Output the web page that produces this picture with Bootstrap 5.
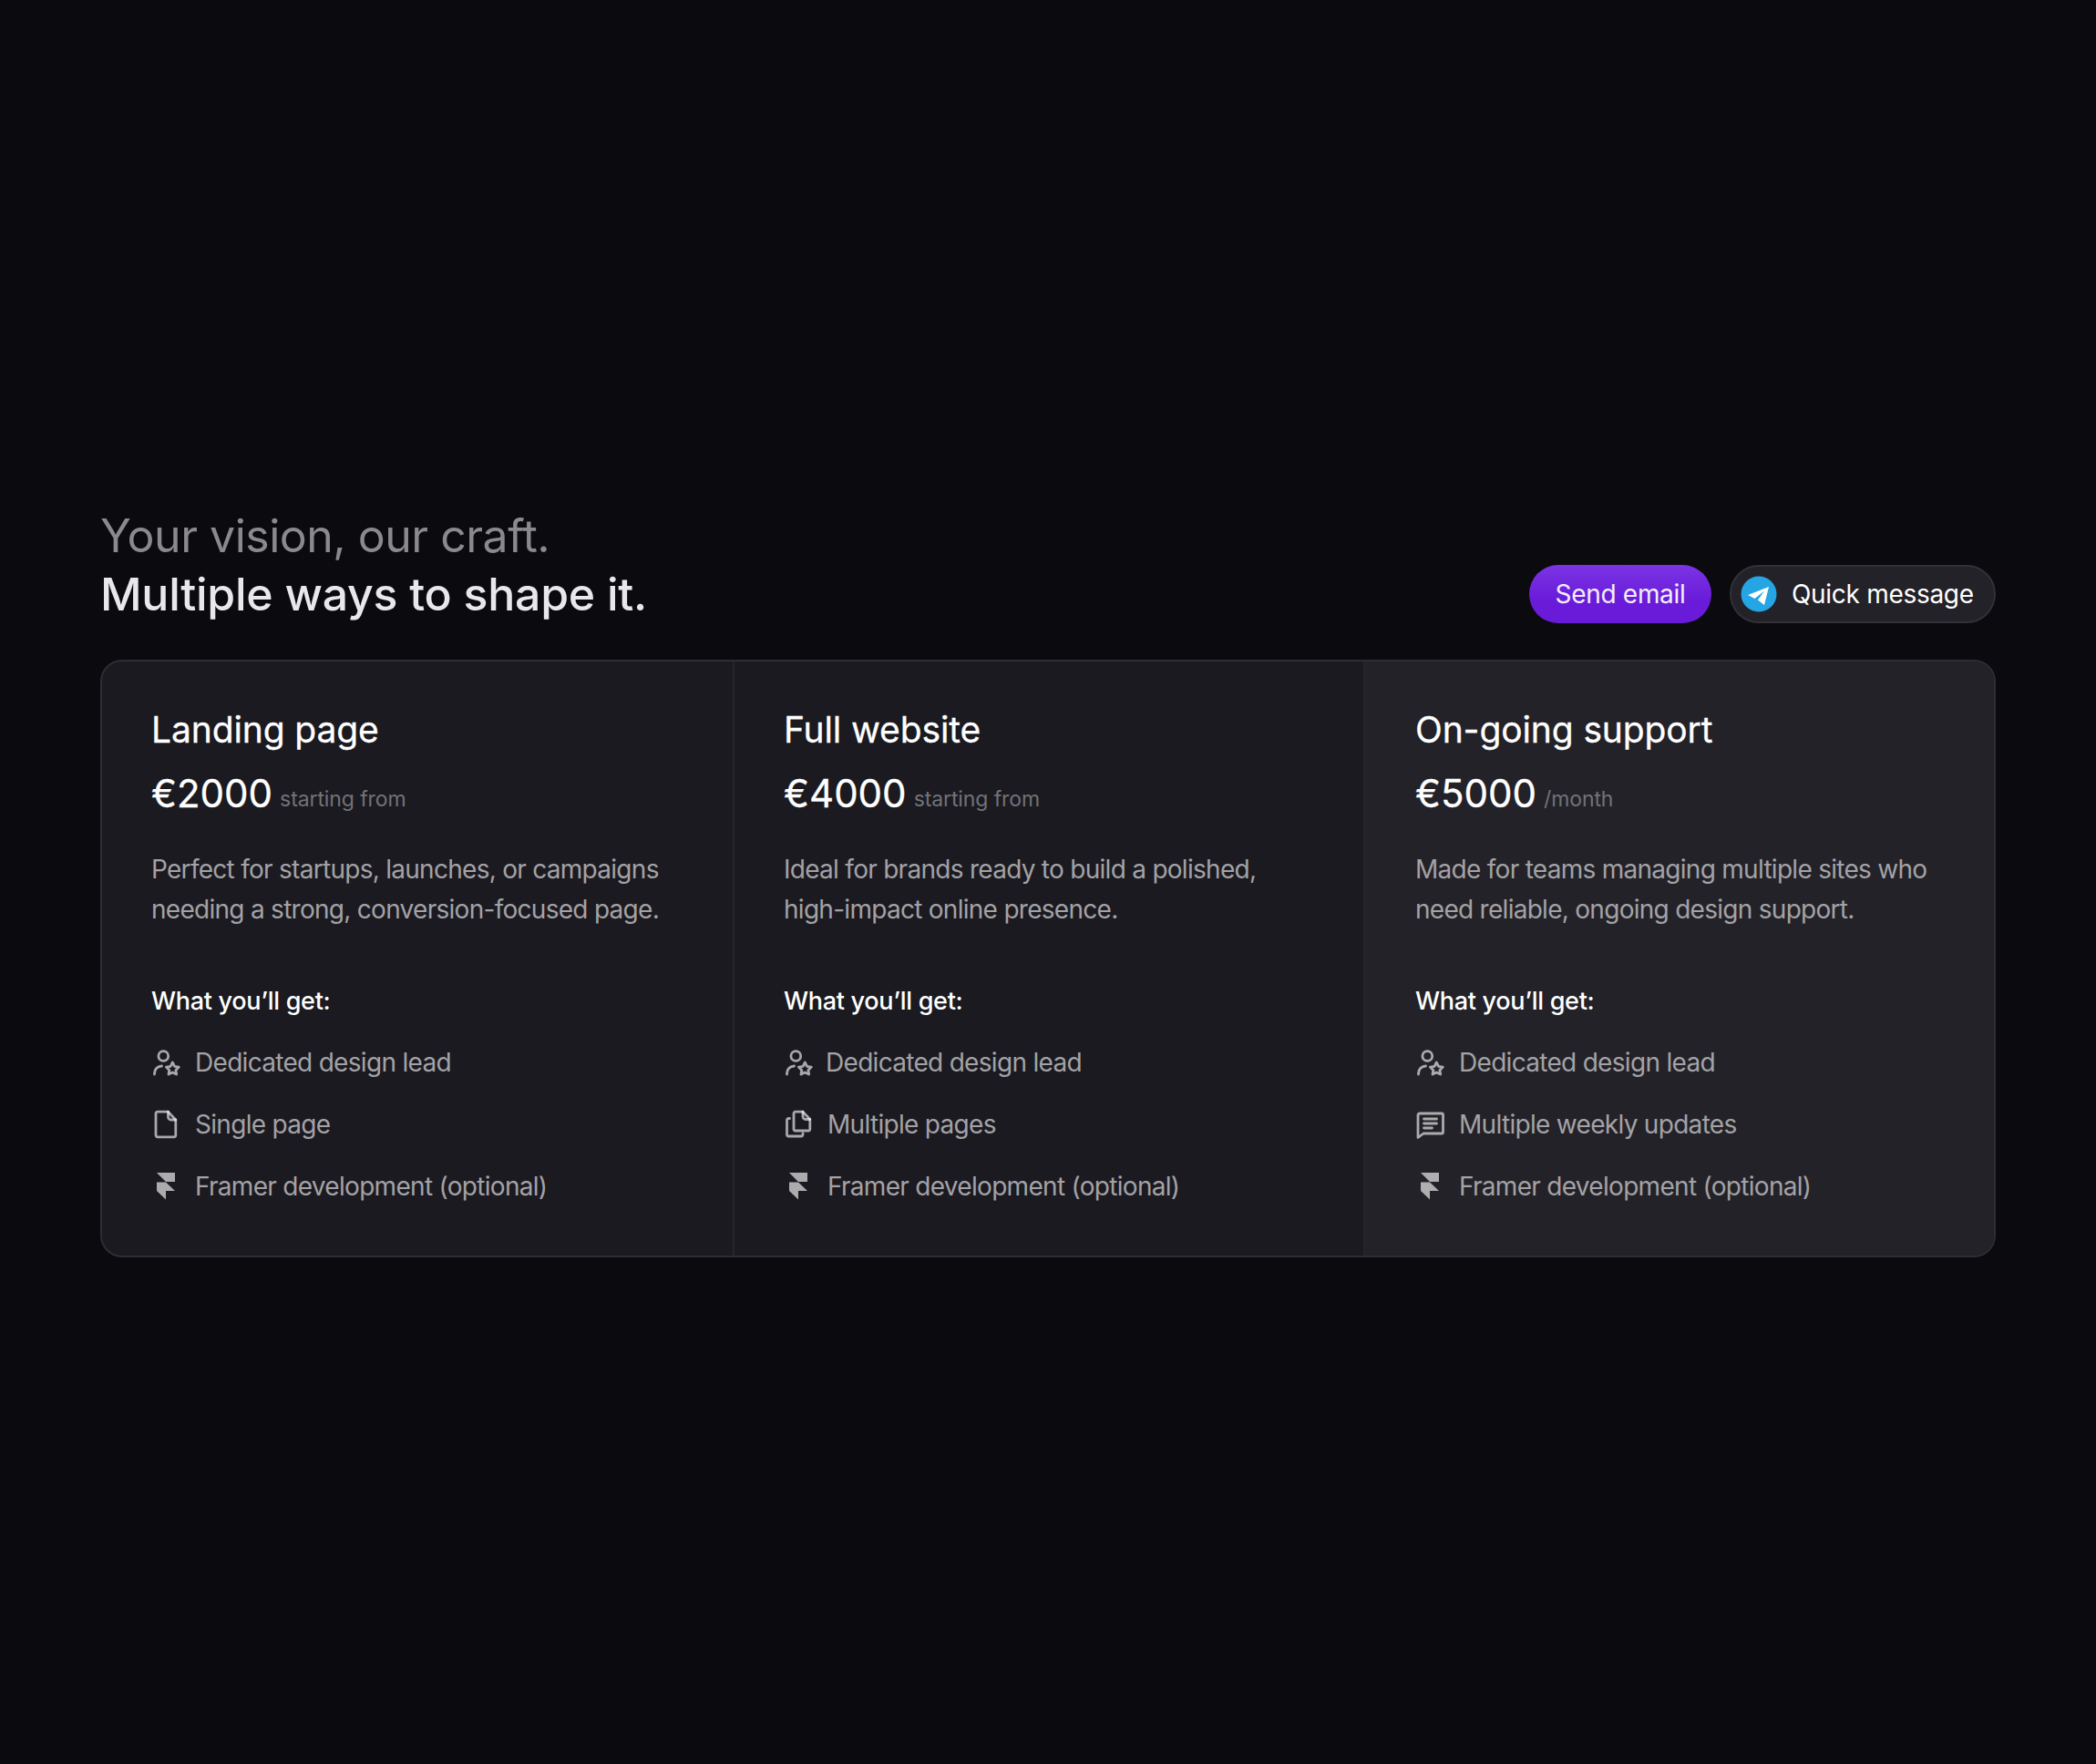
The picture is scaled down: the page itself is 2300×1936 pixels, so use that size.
<!doctype html>
<html lang="en"><head><meta charset="utf-8"><title>Pricing</title>
<link href="https://cdn.jsdelivr.net/npm/bootstrap@5.3.0/dist/css/bootstrap.min.css" rel="stylesheet">
<style>
html,body{height:100%}
body{background:#0a0a0f;font-family:Inter,"Liberation Sans",sans-serif;color:#fff}
.stage{min-height:1936px;padding:0 110px;display:flex;flex-direction:column;justify-content:center}
.head-row{margin-bottom:40px}
.hero{font-size:50px;line-height:64px;font-weight:500;letter-spacing:-.26px;margin:0;color:#e8e8ea}
.hero span{display:block;color:#8a898d;font-weight:400;letter-spacing:-.5px}
.pill{height:64px;border-radius:32px;font-size:28px;line-height:1;color:#fff;display:inline-flex;align-items:center;border:0;letter-spacing:-.3px}
.pill-send{width:200px;justify-content:center;background:linear-gradient(180deg,#7b35e4,#6a1bd9 60%);color:#f2eefc}
.pill-quick{width:292px;background:#232228;border:2px solid #323137;padding-left:10px;gap:16px}
.pill-wrap{gap:20px}
.plans{border:2px solid #2e2d33;border-radius:24px;overflow:hidden;background:#1b1a20}
.plan{padding:52px 54px 48px;height:652px}
.plan+.plan{border-left:2px solid #26252b}
.plan-last{background:#232228;padding-left:55px}
.plan-title{font-size:39px;line-height:46px;font-weight:400;margin:0 0 22px;letter-spacing:-.12px;-webkit-text-stroke:.3px #fff}
.price{font-size:42px;line-height:50px;margin:3px 0 29px;display:flex;align-items:baseline;gap:8px;-webkit-text-stroke:.3px #fff}
.price small{font-size:23px;color:#737277;letter-spacing:-.1px;position:relative;top:-1px;-webkit-text-stroke:0}
.blurb{font-size:28px;line-height:44px;color:#a3a2a6;margin:0 0 59px;letter-spacing:-.72px}
.get{font-size:27px;line-height:40px;margin-bottom:27px;font-weight:500;letter-spacing:-.3px}
.feat{list-style:none;margin:0;padding:0;display:flex;flex-direction:column;gap:28px}
.feat li{display:flex;align-items:center;gap:16px;font-size:28px;line-height:40px;color:#a3a2a6;letter-spacing:-.7px}
.feat li.snug{gap:14px}
.feat svg{width:32px;height:32px;flex:none}
.ic{fill:none;stroke:#fff;stroke-opacity:.62;stroke-width:2.8;stroke-linecap:round;stroke-linejoin:round}
.ic-fill{fill:#fff;fill-opacity:.64}
</style></head><body>
<svg width="0" height="0" class="position-absolute"><defs>
<symbol id="i-lead" viewBox="0 0 32 32"><g class="ic"><circle cx="13.3" cy="9" r="5.4"/><path d="M3.500 29v-1a8 8 0 0 1 8-8"/><path d="M23.300 16l2.300 4.300 4.700.8-3.400 3.300.8 4.700-4.400-2.200-4.300 2.200.8-4.700-3.400-3.300 4.700-.8z"/></g></symbol>
<symbol id="i-page" viewBox="0 0 32 32"><g class="ic"><path d="M7 2.200h11.500l8.300 8.800V27.800a2 2 0 0 1-2 2H7a2 2 0 0 1-2-2V4.200a2 2 0 0 1 2-2z"/><path d="M18.500 2.200V8a3 3 0 0 0 3 3h5.300"/></g></symbol>
<symbol id="i-pages" viewBox="0 0 32 32"><g class="ic"><path d="M13 2.200h8l7.800 8.200V21a2 2 0 0 1-2 2H13a2 2 0 0 1-2-2V4.200a2 2 0 0 1 2-2z"/><path d="M21 2.200V7.500a3 3 0 0 0 3 3h4.800"/><path d="M6.500 9.500H5.500a2 2 0 0 0-2 2V27a2 2 0 0 0 2 2h13.500a2 2 0 0 0 2-2v-1"/></g></symbol>
<symbol id="i-msg" viewBox="0 0 32 32"><g class="ic"><path d="M5 4h24a1.500 1.500 0 0 1 1.500 1.500v19a1.500 1.500 0 0 1-1.500 1.500H9l-6 4.500V6a2 2 0 0 1 2-2z"/><path d="M9.500 10h14M9.500 15h14M9.500 20h9"/></g></symbol>
<symbol id="i-framer" viewBox="0 0 32 32"><path class="ic-fill" d="M6 1h20v10H16zM6 11.600h10l10 9.400H16v9.500L6 21z"/></symbol>
</defs></svg>
<main class="stage">
<div class="d-flex justify-content-between align-items-end head-row">
<h1 class="hero"><span>Your vision, our craft.</span>Multiple ways to shape it.</h1>
<div class="d-flex pill-wrap">
<a class="pill pill-send text-decoration-none" href="#">Send email</a>
<a class="pill pill-quick text-decoration-none" href="#"><svg width="40" height="40" viewBox="0 0 40 40"><circle cx="20" cy="20" r="19.500" fill="#26a5e4"/><path fill="#fff" d="M8 21l23-9-5 20-7-5.500 7-10-10.500 8.500z"/></svg>Quick message</a>
</div></div>
<section class="row g-0 plans">
<article class="col-4 plan"><h2 class="plan-title">Landing page</h2><div class="price">€2000<small>starting from</small></div>
<p class="blurb">Perfect for startups, launches, or campaigns needing a strong, conversion-focused page.</p><div class="get">What you’ll get:</div>
<ul class="feat"><li><svg><use href="#i-lead"/></svg>Dedicated design lead</li><li><svg><use href="#i-page"/></svg>Single page</li><li><svg><use href="#i-framer"/></svg>Framer development (optional)</li></ul></article>
<article class="col-4 plan"><h2 class="plan-title">Full website</h2><div class="price">€4000<small>starting from</small></div>
<p class="blurb">Ideal for brands ready to build a polished, high-impact online presence.</p><div class="get">What you’ll get:</div>
<ul class="feat"><li class="snug"><svg><use href="#i-lead"/></svg>Dedicated design lead</li><li><svg><use href="#i-pages"/></svg>Multiple pages</li><li><svg><use href="#i-framer"/></svg>Framer development (optional)</li></ul></article>
<article class="col-4 plan plan-last"><h2 class="plan-title">On-going support</h2><div class="price">€5000<small>/month</small></div>
<p class="blurb">Made for teams managing multiple sites who need reliable, ongoing design support.</p><div class="get">What you’ll get:</div>
<ul class="feat"><li><svg><use href="#i-lead"/></svg>Dedicated design lead</li><li><svg><use href="#i-msg"/></svg>Multiple weekly updates</li><li><svg><use href="#i-framer"/></svg>Framer development (optional)</li></ul></article>
</section>
</main>
<script src="https://cdn.jsdelivr.net/npm/bootstrap@5.3.0/dist/js/bootstrap.bundle.min.js"></script>
</body></html>
